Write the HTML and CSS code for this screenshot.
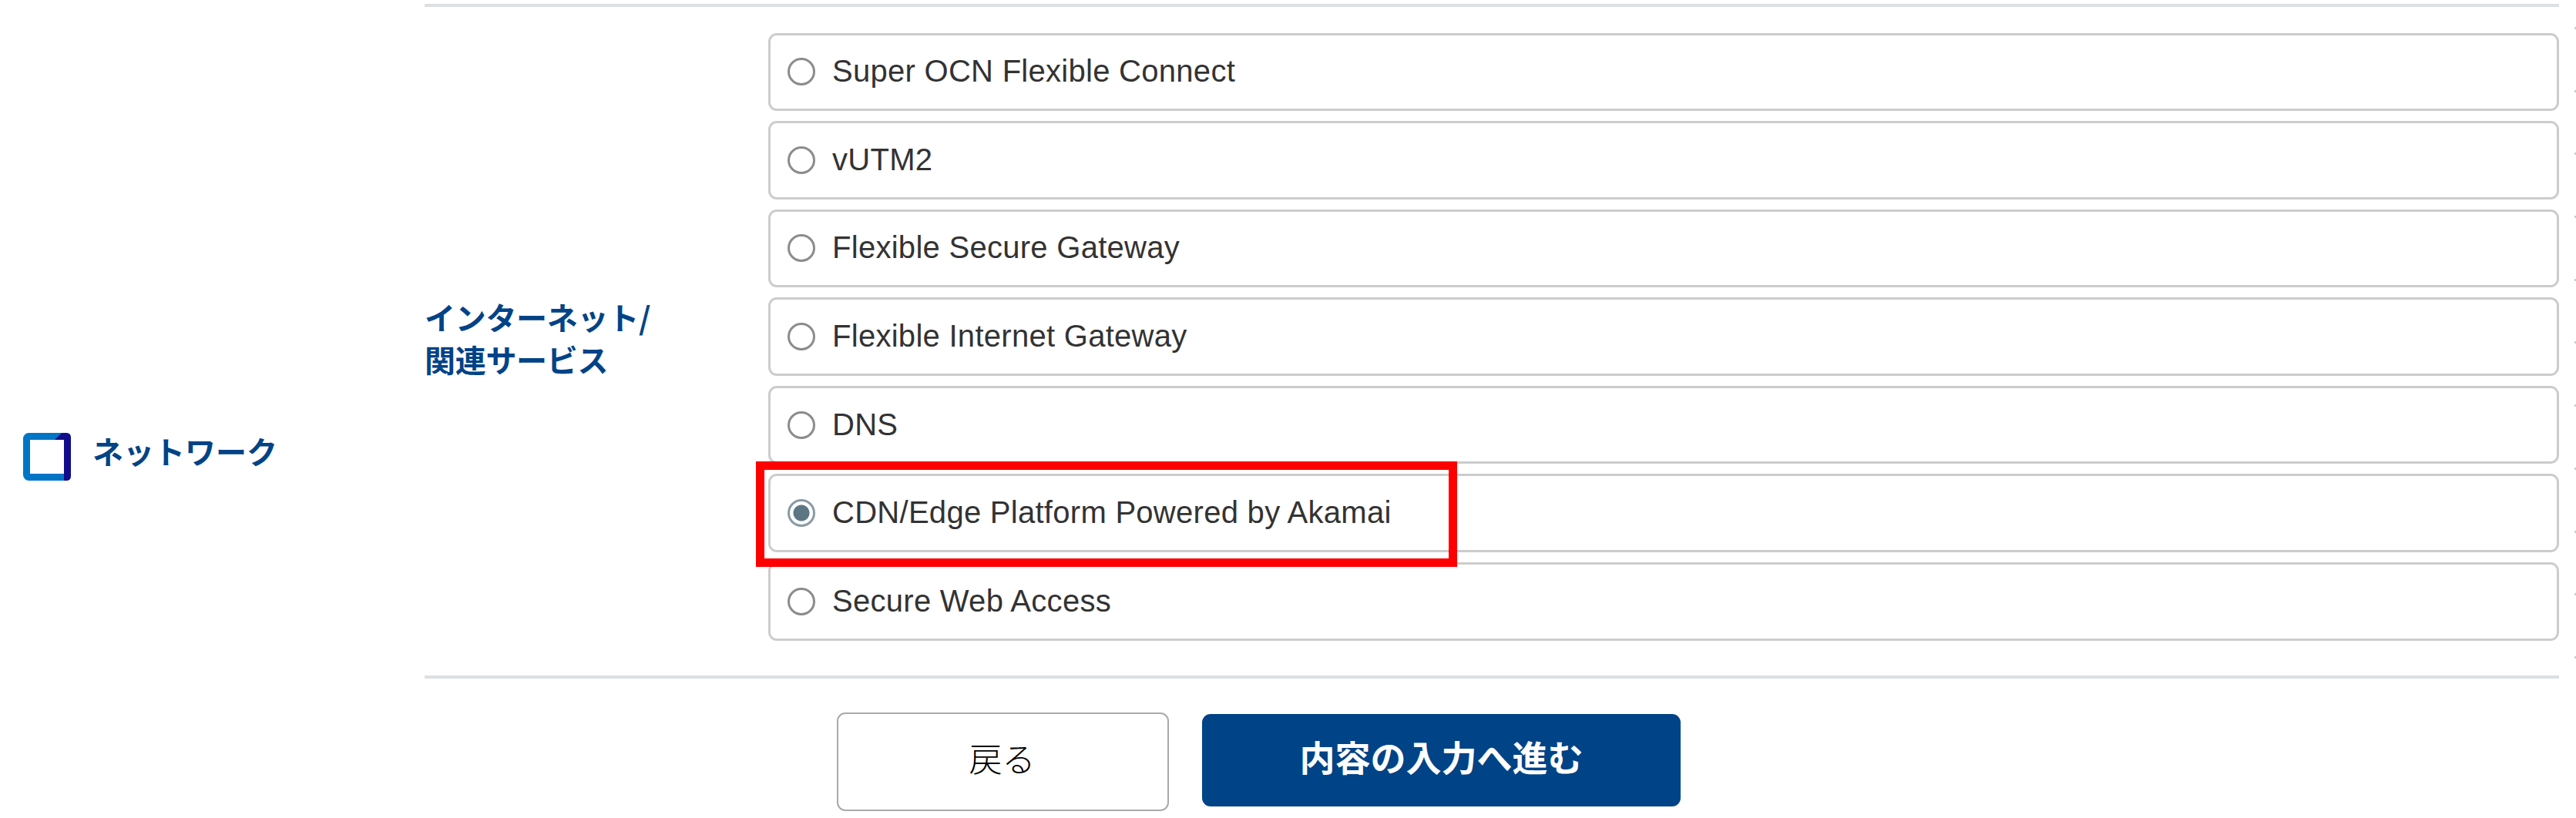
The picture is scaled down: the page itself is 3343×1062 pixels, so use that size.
FILE: index.html
```html
<!DOCTYPE html>
<html lang="ja">
<head>
    <meta charset="UTF-8">
    <meta name="viewport" content="width=device-width, initial-scale=1.0">
    <title>サービス選択</title>
    <link rel="stylesheet" href="styles.css">
</head>
<body>
    <main class="page">
        <div class="category">
            <div class="category-name">
                <svg class="category-icon" viewBox="0 0 62 62">
                    <rect x="4.5" y="4.5" width="53" height="53" rx="3" fill="none" stroke="#0075c5" stroke-width="9"/>
                    <path d="M41 9 L50 0 H56 Q62 0 62 6 V56 Q62 62 56 62 H53 V9 Z" fill="#100c8b"/>
                </svg>
                <span>ネットワーク</span>
            </div>

            <div class="group">
                <h3 class="group-name">インターネット/<br>関連サービス</h3>
                <div class="options">
                    <label class="option"><input type="radio" name="service"><span>Super OCN Flexible Connect</span></label>
                    <label class="option"><input type="radio" name="service"><span>vUTM2</span></label>
                    <label class="option"><input type="radio" name="service"><span>Flexible Secure Gateway</span></label>
                    <label class="option"><input type="radio" name="service"><span>Flexible Internet Gateway</span></label>
                    <label class="option"><input type="radio" name="service"><span>DNS</span></label>
                    <label class="option marked"><input type="radio" name="service" checked><span>CDN/Edge Platform Powered by Akamai</span></label>
                    <label class="option"><input type="radio" name="service"><span>Secure Web Access</span></label>
                </div>
            </div>

            <!-- right edge marks -->
            <div class="edge">
                <i></i><i></i><i></i><i></i><i></i><i></i><i></i><i></i><i></i><i></i><i></i>
            </div>
        </div>

        <div class="actions">
            <button type="button" class="btn btn-back">戻る</button>
            <button type="button" class="btn btn-next">内容の入力へ進む</button>
        </div>
    </main>
</body>
</html>
```

FILE: styles.css
```css
*,
*::after {
    box-sizing: border-box;
}
body {
    margin: 0;
    background: #fff;
    color: #333;
    font-family: "Liberation Sans", "Noto Sans CJK JP", sans-serif;
    overflow: hidden;
}
.page {
    height: 1062px;
    padding-top: 5px;
}
.category {
    display: grid;
    grid-template-columns: 551px 2770px 22px;
    height: 876px;
}
.category-name {
    display: flex;
    align-items: flex-start;
    gap: 28px;
    padding: 557px 0 0 30px;
    font-family: "Noto Sans CJK JP", sans-serif;
    font-size: 40px;
    font-weight: bold;
    line-height: 58px;
    color: #004386;
}
.category-name span {
    margin-top: -6px;
}
.category-icon {
    width: 62px;
    height: 62px;
}
.group {
    display: grid;
    grid-template-columns: 446px 1fr;
    align-items: center;
    border-top: 4px solid #dcdfe3;
    border-bottom: 4px solid #dcdfe3;
}
.group-name {
    margin: 0;
    padding-bottom: 8px;
    font-family: "Noto Sans CJK JP", sans-serif;
    font-size: 40px;
    line-height: 55.5px;
    letter-spacing: -0.3px;
    color: #004386;
}
.options {
    display: flex;
    flex-direction: column;
    align-self: start;
    gap: 13px;
    padding-top: 33.5px;
}
.option {
    position: relative;
    display: flex;
    align-items: center;
    height: 101.6px;
    padding: 0 0 1px 22px;
    border: 3px solid #ccc;
    border-radius: 11px;
    font-size: 40px;
    letter-spacing: 0.28px;
}
.option input {
    appearance: none;
    flex: none;
    width: 36px;
    height: 36px;
    margin: 1px 22px 0 0;
    border: 3px solid #8c8c8c;
    border-radius: 50%;
    background: #fff;
}
.option input:checked {
    border-color: #8a9ba5;
    background: radial-gradient(circle, #5c7684 10px, #fff 11px);
}
/* highlight frame over the selected service */
.marked::after {
    content: "";
    position: absolute;
    z-index: 1;
    top: -19px;
    left: -19px;
    width: 910px;
    height: 137px;
    border: 11px solid #f00;
}
.edge {
    display: flex;
    flex-direction: column;
    align-items: flex-end;
    gap: 78.7px;
    padding-top: 30px;
}
.edge i {
    flex: none;
    width: 2px;
    height: 3px;
    background: #ccc;
}
.actions {
    display: flex;
    align-items: flex-start;
    gap: 43px;
    padding: 44px 0 0 1086px;
}
.btn {
    border-radius: 11px;
    font-family: "Noto Sans CJK JP", sans-serif;
}
.btn-back {
    width: 431px;
    height: 128px;
    padding: 0 2px 13px 0;
    border: 2px solid #aaa;
    background: #fff;
    color: #000;
    font-size: 43px;
    font-weight: 300;
}
.btn-next {
    width: 621px;
    height: 120px;
    margin-top: 2px;
    padding: 0 0 12px;
    border: 0;
    background: #004386;
    color: #fff;
    font-size: 46px;
    font-weight: bold;
}
```
